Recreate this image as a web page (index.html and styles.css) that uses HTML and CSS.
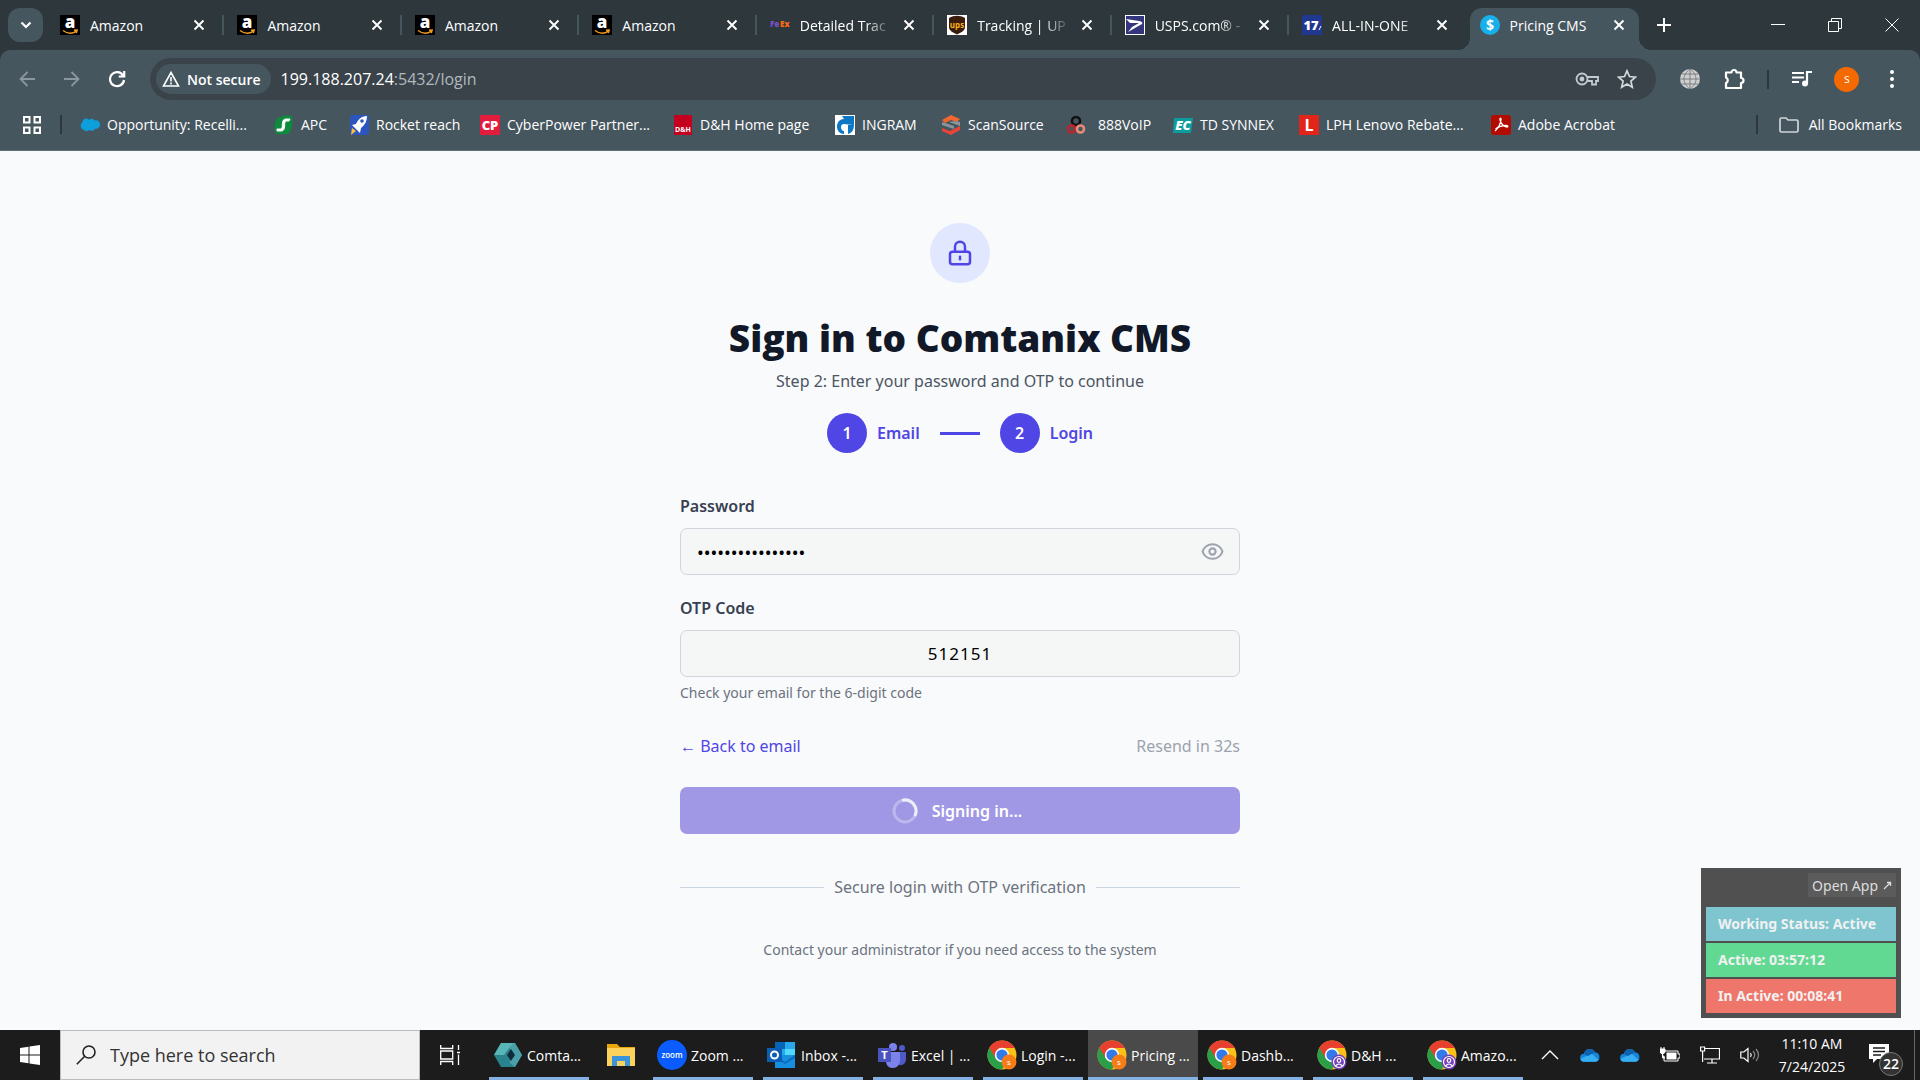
FILE: index.html
```html
<!DOCTYPE html>
<html lang="en">
<head>
  <meta charset="UTF-8" />
  <meta name="viewport" content="width=device-width, initial-scale=1.0" />
  <title>Pricing CMS</title>
  <link rel="stylesheet" href="styles.css">
</head>
<body>
  <!-- Shared icons -->
  <svg class="sprite" aria-hidden="true">
    <symbol id="i-close" viewBox="0 0 12 12"><path d="M1.500 1.500l9 9M10.500 1.500l-9 9" fill="none" stroke="currentColor" stroke-width="1.900"/></symbol>
    <symbol id="i-amazon" viewBox="0 0 20 20">
      <rect width="20" height="20" fill="#000"/>
      <text x="10" y="13" text-anchor="middle" font-family="Open Sans, sans-serif" font-weight="800" font-size="17" fill="#fff">a</text>
      <path d="M3 15.500c4.500 3.400 9.500 3.200 13.500.6M14 15.300l3.200-.2-.9 3" fill="none" stroke="#f39a1f" stroke-width="1.400"/>
    </symbol>
    <symbol id="i-chrome" viewBox="0 0 30 30">
      <circle cx="15" cy="15" r="14.500" fill="#fbc116"/>
      <path d="M15 15L2.400 7.700A14.500 14.500 0 0 0 15 29.500l6.300-10.900z" fill="#2b9f48"/>
      <path d="M2.400 7.700A14.500 14.500 0 0 1 27.600 8H15l-6.300 10.600z" fill="#e8402f"/>
      <circle cx="15" cy="15" r="7.200" fill="#fff"/>
      <circle cx="15" cy="15" r="5.600" fill="#3279ea"/>
    </symbol>
    <symbol id="i-cloud" viewBox="0 0 22 16">
      <path d="M5 15.500a4.500 4.500 0 0 1-.6-9A6.500 6.500 0 0 1 16.500 5a5.300 5.300 0 0 1 .5 10.500z" fill="#1583d8"/>
      <path d="M5.500 15.500c-3 0-4.600-1.500-5-3.500L13 6.500l7.500 6.800c-.8 1.400-2 2.200-3.500 2.200z" fill="#35aef2"/>
      <path d="M4.400 6.500A6.500 6.500 0 0 1 16.500 5L8.500 9z" fill="#0c62ae"/>
    </symbol>
  </svg>

  <!-- Tab strip -->
  <header class="browser">
    <div class="tab-strip">
      <button class="tab-search" aria-label="Search tabs"><svg width="12" height="8" viewBox="0 0 12 8"><path d="M1.500 1.500L6 6l4.500-4.500" fill="none" stroke="currentColor" stroke-width="2.200"/></svg></button>
      <div class="tabs">
        <div class="tab"><svg class="fav"><use href="#i-amazon"/></svg><span class="tab-title">Amazon</span><button class="tab-close" aria-label="Close"><svg width="12" height="12"><use href="#i-close"/></svg></button></div>
        <div class="tab"><svg class="fav"><use href="#i-amazon"/></svg><span class="tab-title">Amazon</span><button class="tab-close" aria-label="Close"><svg width="12" height="12"><use href="#i-close"/></svg></button></div>
        <div class="tab"><svg class="fav"><use href="#i-amazon"/></svg><span class="tab-title">Amazon</span><button class="tab-close" aria-label="Close"><svg width="12" height="12"><use href="#i-close"/></svg></button></div>
        <div class="tab"><svg class="fav"><use href="#i-amazon"/></svg><span class="tab-title">Amazon</span><button class="tab-close" aria-label="Close"><svg width="12" height="12"><use href="#i-close"/></svg></button></div>
        <div class="tab">
          <svg class="fav" viewBox="0 0 20 20" font-family="Open Sans, sans-serif" font-weight="800" font-size="8"><text x="0" y="12" fill="#7a4fc4">Fe</text><text x="10" y="12" fill="#ff6a13">Ex</text></svg>
          <span class="tab-title fade">Detailed Trac</span><button class="tab-close" aria-label="Close"><svg width="12" height="12"><use href="#i-close"/></svg></button>
        </div>
        <div class="tab">
          <svg class="fav" viewBox="0 0 20 20"><rect width="20" height="20" fill="#fff"/><path d="M2 3c5-3 11-3 16 0v9c0 4-4 5.500-8 7.500-4-2-8-3.500-8-7.500z" fill="#3a1c0c"/><text x="10" y="13" text-anchor="middle" font-family="Open Sans, sans-serif" font-weight="700" font-size="8" fill="#fbb215">ups</text></svg>
          <span class="tab-title fade">Tracking | UP</span><button class="tab-close" aria-label="Close"><svg width="12" height="12"><use href="#i-close"/></svg></button>
        </div>
        <div class="tab">
          <svg class="fav" viewBox="0 0 20 20"><rect width="20" height="20" fill="#fff"/><path d="M1 1h18v18H1z" fill="#35357e"/><path d="M1 4l13 2c3 .5 4 1.500 3 3L3 17l4-5 7-4H5z" fill="#fff"/></svg>
          <span class="tab-title fade">USPS.com® -</span><button class="tab-close" aria-label="Close"><svg width="12" height="12"><use href="#i-close"/></svg></button>
        </div>
        <div class="tab">
          <svg class="fav" viewBox="0 0 20 20"><rect width="20" height="20" rx="1" fill="#20388f"/><text x="9" y="15" text-anchor="middle" font-family="Open Sans, sans-serif" font-weight="800" font-size="13" fill="#fff">17</text><path d="M17 15l2-4" stroke="#fff"/></svg>
          <span class="tab-title fade">ALL-IN-ONE</span><button class="tab-close" aria-label="Close"><svg width="12" height="12"><use href="#i-close"/></svg></button>
        </div>
        <div class="tab active">
          <svg class="fav" viewBox="0 0 20 20"><circle cx="10" cy="10" r="10" fill="#16b0ea"/><text x="10" y="15" text-anchor="middle" font-family="Open Sans, sans-serif" font-weight="700" font-size="14" fill="#fff">$</text></svg>
          <span class="tab-title">Pricing CMS</span><button class="tab-close" aria-label="Close"><svg width="12" height="12"><use href="#i-close"/></svg></button>
        </div>
      </div>
      <button class="new-tab" aria-label="New tab"><svg width="14" height="14" viewBox="0 0 14 14"><path d="M7 0v14M0 7h14" stroke="currentColor" stroke-width="2"/></svg></button>
      <div class="window-buttons">
        <button aria-label="Minimize"><svg width="14" height="14" viewBox="0 0 14 14"><path d="M0 6.500h14" stroke="currentColor"/></svg></button>
        <button aria-label="Restore"><svg width="14" height="14" viewBox="0 0 14 14"><path d="M.5 3.500h10v10H.5zM3.500 3V.5h10v10H11" fill="none" stroke="currentColor"/></svg></button>
        <button aria-label="Close window"><svg width="14" height="14" viewBox="0 0 14 14"><path d="M.5.500l13 13M13.500.500l-13 13" stroke="currentColor"/></svg></button>
      </div>
    </div>

    <!-- Address bar -->
    <div class="toolbar">
      <button class="tool dim" aria-label="Back"><svg width="16" height="16" viewBox="0 0 16 16"><path d="M16 8H1.500M8.500 1L1.500 8l7 7" fill="none" stroke="currentColor" stroke-width="1.800"/></svg></button>
      <button class="tool dim" aria-label="Forward"><svg width="16" height="16" viewBox="0 0 16 16"><path d="M0 8h14.500M7.500 1l7 7-7 7" fill="none" stroke="currentColor" stroke-width="1.800"/></svg></button>
      <button class="tool" aria-label="Reload"><svg width="18" height="18" viewBox="0 0 18 18"><path d="M15 5.500A7 7 0 1 0 16 10M16.200 1v5.500h-5.500" fill="none" stroke="currentColor" stroke-width="2.200"/></svg></button>
      <div class="omnibox">
        <button class="chip"><svg width="18" height="16" viewBox="0 0 18 16"><path d="M9 1.500L16.500 15h-15zM9 6v4.500M9 11.500v2" fill="none" stroke="currentColor" stroke-width="1.600"/></svg>Not secure</button>
        <span class="url">199.188.207.24<span class="url-path">:5432/login</span></span>
        <svg width="24" height="14" viewBox="0 0 24 14" fill="none" stroke="#c3cbd0" stroke-width="1.800"><circle cx="7" cy="7" r="5.500"/><circle cx="7" cy="7" r="1.500" fill="#c3cbd0"/><path d="M12 5h11v4h-2v3.500h-4V9h-5"/></svg>
        <svg class="star" width="20" height="20" viewBox="0 0 20 20"><path d="M10 1.800l2.500 5.700 6 .6-4.600 4 1.400 6.100-5.300-3.200-5.300 3.200 1.400-6.100-4.600-4 6-.6z" fill="none" stroke="#d3dade" stroke-width="1.700"/></svg>
      </div>
      <div class="extensions">
        <button class="tool" aria-label="Extension"><svg width="20" height="20" viewBox="0 0 20 20"><circle cx="10" cy="10" r="10" fill="#cfcfcf"/><path d="M10 0v20M0 10h20M2 5h16M2 15h16M10 0C2 6 2 14 10 20M10 0c8 6 8 14 0 20" fill="none" stroke="#7b7f82"/></svg></button>
        <button class="tool" aria-label="Extensions"><svg width="22" height="22" viewBox="0 0 22 22"><path d="M2 4.500h5.500a2.500 2.500 0 0 1 5 0H17v5.500a2.500 2.500 0 0 1 0 5V20H2v-5a3 3 0 0 0 0-5.500z" fill="none" stroke="currentColor" stroke-width="2.200" stroke-linejoin="round"/></svg></button>
        <span class="bar-sep"></span>
        <button class="tool" aria-label="Media"><svg width="20" height="18" viewBox="0 0 20 18"><path d="M0 3h12M0 7.500h12M0 12h7M15 13V2h5" fill="none" stroke="currentColor" stroke-width="2.200"/><circle cx="13" cy="13.500" r="3" fill="currentColor"/></svg></button>
        <button class="avatar">s</button>
        <button class="tool" aria-label="Menu"><svg width="4" height="18" viewBox="0 0 4 18" fill="currentColor"><circle cx="2" cy="2" r="2"/><circle cx="2" cy="9" r="2"/><circle cx="2" cy="16" r="2"/></svg></button>
      </div>
    </div>

    <!-- Bookmarks bar -->
    <nav class="bookmarks">
      <button class="apps" aria-label="Apps"><svg width="18" height="18" viewBox="0 0 18 18"><path d="M1 1h5.500v5.500H1zM11.500 1H17v5.500h-5.500zM1 11.500h5.500V17H1zM11.500 11.500H17V17h-5.500z" fill="none" stroke="currentColor" stroke-width="2"/></svg></button>
      <span class="bar-sep"></span>
      <div class="bookmark-list">
        <a href="#"><svg class="fav" viewBox="0 0 20 20"><path d="M4 15a4.500 4.500 0 0 1-1.500-8C3 3 7 2.500 9 5c2-2 4.500-1.500 5.500.5 3-.8 5.500 1 5.500 4s-2.500 4.800-5 4.300c-1.500 2.500-4 2.500-5.500 1.200-2 1.500-4.500 1.500-5.500 0z" fill="#0d9fdb"/></svg>Opportunity: Recelli...</a>
        <a href="#"><svg class="fav" viewBox="0 0 20 20"><path d="M3 4c4-4 11-4 15-3 1 8 0 14-4 18H2C0 13 0 8 3 4z" fill="#0c8b3c"/><path d="M16 4h-4C6 4 10 13 7 14H3v2h4c6 0 2-9 5-10h3z" fill="#fff" stroke="#fff"/></svg>APC</a>
        <a href="#"><svg class="fav" viewBox="0 0 20 20"><rect x="1" width="19" height="20" rx="3" fill="#2c55bd"/><path d="M18 1c-6 0-9 4-11 8l-4 1 5 5 3 3 1-5c4-3 6-7 6-12z" fill="#fff"/><path d="M3 13l4 3-5 4z" fill="#f9c431"/><circle cx="13" cy="6" r="1.800" fill="#2c55bd"/></svg>Rocket reach</a>
        <a href="#"><svg class="fav" viewBox="0 0 20 20"><rect width="20" height="20" fill="#e31c3d"/><text x="10" y="15" text-anchor="middle" font-family="Open Sans, sans-serif" font-weight="800" font-size="13" fill="#fff">CP</text></svg>CyberPower Partner...</a>
        <a href="#"><svg class="fav" viewBox="0 0 20 20"><rect x="1" width="18" height="20" fill="#c4001f"/><text x="10" y="17" text-anchor="middle" font-family="Open Sans, sans-serif" font-weight="700" font-size="7" fill="#fff">D&amp;H</text></svg>D&amp;H Home page</a>
        <a href="#"><svg class="fav" viewBox="0 0 20 20"><rect width="20" height="20" fill="#fff"/><path d="M7 1h12v8c0 6-2 9-6 10v-9h5L9 9c-2 0-3 1-3 3s1 4 3 4v3c-4 0-7-3-7-7.500S5 4 9 4z" fill="#0b77c5"/></svg>INGRAM</a>
        <a href="#"><svg class="fav" viewBox="0 0 20 20"><path d="M10 0l9 4-3 3-6-2-6 3-3-3z" fill="#f0682f"/><path d="M1 7l12 4v3L1 10zM8 7l11 4v-4l-5-1z" fill="#8b9598"/><path d="M1 13l8 3 6-3 4-2v4l-9 5-9-4z" fill="#e8443a"/></svg>ScanSource</a>
        <a class="wide" href="#"><svg class="fav" viewBox="0 0 20 20" fill="none" stroke-width="2.600"><circle cx="10" cy="6" r="4" stroke="#101010"/><circle cx="5.500" cy="14" r="3.500" stroke="#b8262c"/><circle cx="14.500" cy="14" r="3.500" stroke="#e88a78"/></svg>888VoIP</a>
        <a href="#"><svg class="fav" viewBox="0 0 20 20"><path d="M1 3h19l-2 15H0z" fill="#0d9c9d"/><text x="10" y="15" text-anchor="middle" font-family="Open Sans, sans-serif" font-weight="800" font-style="italic" font-size="13" fill="#fff">EC</text></svg>TD SYNNEX</a>
        <a href="#"><svg class="fav" viewBox="0 0 20 20"><rect width="20" height="20" fill="#e1251b"/><text x="10" y="16" text-anchor="middle" font-family="Open Sans, sans-serif" font-weight="700" font-size="16" fill="#fff">L</text></svg>LPH Lenovo Rebate...</a>
        <a href="#"><svg class="fav" viewBox="0 0 20 20"><rect width="20" height="20" rx="3" fill="#b30b00"/><path d="M4 16c3-2 6-8 6-11.500 0-2-1.500-1.500-1 .5.500 3 4 7 7 7 1.500 0 1-1.500-1-1.500-4 0-8 1.500-10.500 3.500" fill="none" stroke="#fff" stroke-width="1.300"/></svg>Adobe Acrobat</a>
      </div>
      <span class="bar-sep"></span>
      <a class="all-bookmarks" href="#"><svg width="20" height="16" viewBox="0 0 20 16"><path d="M1 2.500Q1 1 2.500 1H7l2 2h8.500Q19 3 19 4.500v9q0 1.500-1.500 1.500h-15Q1 15 1 13.500z" fill="none" stroke="#cfd5d9" stroke-width="1.700"/></svg>All Bookmarks</a>
    </nav>
  </header>

  <!-- Sign in page -->
  <main class="page">
    <div class="login">
      <div class="lock-badge"><svg width="30" height="30" viewBox="0 0 24 24" fill="none" stroke="#4f46e5" stroke-width="2" stroke-linecap="round" stroke-linejoin="round"><path d="M12 15v2m-6 4h12a2 2 0 002-2v-6a2 2 0 00-2-2H6a2 2 0 00-2 2v6a2 2 0 002 2zm10-10V7a4 4 0 00-8 0v4"/></svg></div>
      <h1>Sign in to Comtanix CMS</h1>
      <p class="subtitle">Step 2: Enter your password and OTP to continue</p>
      <div class="steps">
        <span class="step-num">1</span><span class="step-name">Email</span>
        <span class="step-line"></span>
        <span class="step-num">2</span><span class="step-name">Login</span>
      </div>

      <form>
        <label for="password">Password</label>
        <div class="field">
          <input type="password" id="password" value="comtanix20250724" />
          <button type="button" class="eye" aria-label="Show password"><svg width="25" height="25" viewBox="0 0 24 24" fill="none" stroke="#9ca3af" stroke-width="2" stroke-linecap="round" stroke-linejoin="round"><path d="M15 12a3 3 0 11-6 0 3 3 0 016 0z"/><path d="M2.458 12C3.732 7.943 7.523 5 12 5c4.478 0 8.268 2.943 9.542 7-1.274 4.057-5.064 7-9.542 7-4.477 0-8.268-2.943-9.542-7z"/></svg></button>
        </div>
        <label for="otp">OTP Code</label>
        <input class="otp" type="text" id="otp" value="512151" maxlength="6" />
        <p class="hint">Check your email for the 6-digit code</p>
        <div class="form-links">
          <a href="#">← Back to email</a>
          <span class="resend">Resend in 32s</span>
        </div>
        <button type="button" class="submit"><svg width="26" height="26" viewBox="0 0 26 26" fill="none" stroke="#fff" stroke-width="3"><circle cx="13" cy="13" r="11" opacity=".3"/><path d="M10 2.400A11 11 0 0 1 22.800 18" opacity=".75"/></svg>Signing in...</button>
      </form>

      <div class="divider"><span>Secure login with OTP verification</span></div>
      <p class="contact">Contact your administrator if you need access to the system</p>
    </div>

    <!-- Time tracker floating over the page -->
    <aside class="tracker">
      <button class="open-app">Open App <svg width="9" height="9" viewBox="0 0 9 9"><path d="M1 8l6-6M4 1.500h3.500V5" fill="none" stroke="currentColor" stroke-width="1.300"/></svg></button>
      <div class="track status">Working Status: Active</div>
      <div class="track on">Active: 03:57:12</div>
      <div class="track off">In Active: 00:08:41</div>
    </aside>
  </main>

  <!-- Taskbar -->
  <footer class="taskbar">
    <button class="start" aria-label="Start"><svg width="20" height="20" viewBox="0 0 20 20" fill="#fff"><path d="M0 3l8.500-1.200v7.700H0zM9.500 1.600L20 0v9.500H9.500zM0 10.500h8.500v7.700L0 17zM9.500 10.500H20V20L9.500 18.400z"/></svg></button>
    <label class="search">
      <svg width="20" height="20" viewBox="0 0 20 20" fill="none" stroke="#222" stroke-width="1.600"><circle cx="13" cy="7" r="6"/><path d="M8.500 11.500L.8 19.200"/></svg>
      <input type="text" placeholder="Type here to search" />
    </label>
    <button class="task-view" aria-label="Task view"><svg width="20" height="20" viewBox="0 0 20 20" fill="none" stroke="#fff" stroke-width="1.300"><path d="M.7 0v3.500h12V0M.7 20v-3.500h12V20M.7 6h12v8H.7zM18.500 0v5M18.500 9.500V20M17 7.500h3"/></svg></button>
    <div class="tasks">
      <button class="task"><svg class="task-icon" viewBox="0 0 30 30"><path d="M8 3h14l7 12-7 12H8L1 15z" fill="#2a828c"/><path d="M8 3h14l-5 4-6 8H1z" fill="#58b5b8"/><path d="M17 7l5-4 7 12-7 12-5-4z" fill="#4aa0a6"/><path d="M18 9l4 6-4 6-4-6z" fill="#122d3a"/></svg><span>Comta...</span></button>
      <button class="task pinned" aria-label="File Explorer"><svg class="task-icon" viewBox="0 0 30 30"><path d="M1 4h10l3 3h15v18H1z" fill="#e8a80c"/><path d="M1 8h28v18H1z" fill="#fbd35c"/><path d="M6 26V16h18v10h-5v-5h-8v5z" fill="#3b94d9"/></svg></button>
      <button class="task"><svg class="task-icon" viewBox="0 0 30 30"><circle cx="15" cy="15" r="15" fill="#0b5cff"/><text x="15" y="18" text-anchor="middle" font-family="Open Sans, sans-serif" font-weight="600" font-size="8" fill="#fff">zoom</text></svg><span>Zoom ...</span></button>
      <button class="task"><svg class="task-icon" viewBox="0 0 30 30"><path d="M8 2h20v13H8z" fill="#28a8ea"/><path d="M8 2h10v7H8z" fill="#0364b8"/><path d="M18 9h10v6H18z" fill="#50d9ff"/><path d="M8 15h20v13H8z" fill="#1490df"/><path d="M8 15l10 7 10-7v3l-10 6-10-6z" fill="#0c6cbb"/><path d="M0 8h15v14H0z" fill="#0a5fb4"/><circle cx="7.500" cy="15" r="3.500" fill="none" stroke="#fff" stroke-width="2"/></svg><span>Inbox -...</span></button>
      <button class="task"><svg class="task-icon" viewBox="0 0 30 30"><circle cx="16" cy="7" r="4" fill="#7b83eb"/><circle cx="25" cy="8" r="3" fill="#5059c9"/><path d="M20 12h9v8q-1 6-7 5z" fill="#5059c9"/><path d="M9 12h14v9q-1 7-7 7t-7-6z" fill="#7b83eb"/><path d="M1 8h13v14H1z" fill="#4b53bc"/><text x="7.500" y="19" text-anchor="middle" font-family="Open Sans, sans-serif" font-weight="700" font-size="11" fill="#fff">T</text></svg><span>Excel | ...</span></button>
      <button class="task"><svg class="task-icon" viewBox="0 0 30 30"><use href="#i-chrome"/><circle cx="22" cy="22" r="7.500" fill="#f57c16"/><text x="22" y="25" text-anchor="middle" font-family="Open Sans, sans-serif" font-size="8" fill="#fff">s</text></svg><span>Login -...</span></button>
      <button class="task current"><svg class="task-icon" viewBox="0 0 30 30"><use href="#i-chrome"/><circle cx="22" cy="22" r="7.500" fill="#f57c16"/><text x="22" y="25" text-anchor="middle" font-family="Open Sans, sans-serif" font-size="8" fill="#fff">s</text></svg><span>Pricing ...</span></button>
      <button class="task"><svg class="task-icon" viewBox="0 0 30 30"><use href="#i-chrome"/><circle cx="22" cy="22" r="7.500" fill="#f57c16"/><text x="22" y="25" text-anchor="middle" font-family="Open Sans, sans-serif" font-size="8" fill="#fff">s</text></svg><span>Dashb...</span></button>
      <button class="task"><svg class="task-icon" viewBox="0 0 30 30"><use href="#i-chrome"/><circle cx="22" cy="22" r="7.500" fill="#7341b8"/><g fill="none" stroke="#fff" stroke-width="1.200"><circle cx="22" cy="22" r="5.500"/><circle cx="22" cy="20.500" r="1.800"/><path d="M18.500 26q3.500-4 7 0"/></g></svg><span>D&amp;H ...</span></button>
      <button class="task"><svg class="task-icon" viewBox="0 0 30 30"><use href="#i-chrome"/><circle cx="22" cy="22" r="7.500" fill="#7341b8"/><g fill="none" stroke="#fff" stroke-width="1.200"><circle cx="22" cy="22" r="5.500"/><circle cx="22" cy="20.500" r="1.800"/><path d="M18.500 26q3.500-4 7 0"/></g></svg><span>Amazo...</span></button>
    </div>
    <div class="tray">
      <svg width="20" height="20" viewBox="0 0 20 20"><path d="M2 14l8-8 8 8" fill="none" stroke="#fff" stroke-width="1.400"/></svg>
      <svg width="20" height="20"><use href="#i-cloud"/></svg>
      <svg width="20" height="20"><use href="#i-cloud"/></svg>
      <svg width="20" height="20" viewBox="0 0 20 20"><path d="M5 6h13v3h2v4h-2v3H4v-5" fill="none" stroke="#fff"/><path d="M6.500 7.500h10v7H6.500z" fill="#fff"/><path d="M0 4h5v3q-1 2-2.500 2T0 7zM1 2v2M4 2v2M2.500 9v4H5" fill="#fff" stroke="#fff"/></svg>
      <svg width="20" height="20" viewBox="0 0 20 20" fill="none" stroke="#fff" stroke-width="1.200"><path d="M5 3.500h14.500v10.500H4M12 14v4M7 18h10M.6 2h4v4h-4zM2.600 6v11"/></svg>
      <svg width="20" height="20" viewBox="0 0 20 20" fill="none" stroke="#fff" stroke-width="1.200"><path d="M.8 7h3L8 3.500v13L3.800 13h-3zM10.500 8q1.500 2 0 4"/><path d="M13 6q3.500 4 0 8M16 4q5 6 0 12" stroke="#888"/></svg>
    </div>
    <div class="clock"><span>11:10 AM</span><span>7/24/2025</span></div>
    <button class="notify" aria-label="Notifications">
      <svg width="20" height="20" viewBox="0 0 20 20"><path d="M0 1h20v15H8l-4 4v-4H0z" fill="#fff"/><path d="M4 5h12M4 8.500h12M4 12h8" stroke="#1c1c1c" stroke-width="1.400"/></svg>
      <span class="count">22</span>
    </button>
    <span class="desktop-edge"></span>
  </footer>
</body>
</html>
```

FILE: styles.css
```css
* {
  box-sizing: border-box;
}
body {
  margin: 0;
  min-height: 100vh;
  display: flex;
  flex-direction: column;
  font-family: "Open Sans", "Noto Sans", sans-serif;
  font-size: 14px;
  background-color: #f9fafb;
}
button {
  padding: 0;
  border: none;
  background: none;
  color: inherit;
  font: inherit;
  cursor: pointer;
}
a {
  color: inherit;
  text-decoration: none;
}
svg {
  display: block;
  flex: none;
}
.sprite {
  display: none;
}
.fav {
  width: 20px;
  height: 20px;
}

/* Browser frame */
.browser {
  background-color: #2d373c;
  color: #fff;
}
.tab-strip {
  display: flex;
  height: 50px;
  padding: 8px 0 0 8px;
}
.tab-search {
  display: flex;
  align-items: center;
  justify-content: center;
  width: 35px;
  height: 34px;
  margin-right: 7px;
  border-radius: 12px;
  background-color: #46565f;
}
.tabs {
  display: flex;
  flex: 0 1 1589px;
  gap: 8px;
  min-width: 0;
}
.tab {
  position: relative;
  display: flex;
  flex: 1;
  align-items: center;
  gap: 10px;
  min-width: 0;
  height: 34px;
  padding: 0 14px 0 10px;
}
.tab + .tab:not(.active)::before {
  content: "";
  position: absolute;
  left: -5px;
  top: 7px;
  width: 2px;
  height: 20px;
  background-color: #46565f;
}
.tab-title {
  flex: 1;
  overflow: hidden;
  white-space: nowrap;
}
.fade {
  -webkit-mask-image: linear-gradient(to right, #000 70%, transparent);
  mask-image: linear-gradient(to right, #000 70%, transparent);
}
.tab.active {
  height: 42px;
  padding-bottom: 8px;
  border-radius: 12px 12px 0 0;
  background-color: #46565f;
}
.tab.active::before,
.tab.active::after {
  content: "";
  position: absolute;
  bottom: 0;
  width: 12px;
  height: 12px;
}
.tab.active::before {
  right: 100%;
  background: radial-gradient(circle at 0 0, transparent 12px, #46565f 12px);
}
.tab.active::after {
  left: 100%;
  background: radial-gradient(circle at 100% 0, transparent 12px, #46565f 12px);
}
.new-tab {
  display: flex;
  align-items: center;
  justify-content: center;
  width: 34px;
  height: 34px;
  margin-left: 8px;
}
.window-buttons {
  display: flex;
  margin-left: auto;
}
.window-buttons button {
  display: flex;
  align-items: center;
  justify-content: center;
  width: 57px;
  height: 33px;
}

.toolbar {
  display: flex;
  align-items: center;
  height: 51px;
  padding: 7px 16px 0 15px;
  border-radius: 10px 10px 0 0;
  background-color: #46565f;
}
.tool {
  display: flex;
  align-items: center;
  justify-content: center;
  width: 24px;
  height: 24px;
  margin-right: 21px;
}
.dim {
  color: #8b979e;
}
.omnibox {
  display: flex;
  flex: 1;
  align-items: center;
  height: 42px;
  padding: 0 19px 0 6px;
  border-radius: 21px;
  background-color: #3a434a;
}
.chip {
  display: flex;
  align-items: center;
  gap: 7px;
  height: 30px;
  padding: 0 10px 0 6px;
  border-radius: 15px;
  background-color: #46565f;
  font-weight: 600;
}
.url {
  flex: 1;
  margin-left: 10px;
  font-size: 16px;
}
.url-path {
  color: #b0b9be;
}
.star {
  margin-left: 18px;
}
.extensions {
  display: flex;
  align-items: center;
  justify-content: space-between;
  width: 226px;
  margin-left: 22px;
}
.extensions .tool {
  margin: 0;
}
.bar-sep {
  width: 2px;
  height: 19px;
  background-color: #2d373c;
}
.avatar {
  width: 25px;
  height: 25px;
  border-radius: 50%;
  background-color: #f56a00;
  font-size: 12px;
  line-height: 24px;
}

.bookmarks {
  display: flex;
  align-items: center;
  height: 50px;
  padding: 0 18px 2px 23px;
  border-bottom: 1px solid #5f6d75;
  background-color: #46565f;
}
.apps {
  margin-right: 19px;
}
.bookmark-list {
  display: grid;
  flex: 1;
  grid-template-columns: 194px 75px 131px 193px 162px 106px 125px 107px 126px 192px auto;
  margin-left: 18px;
  overflow: hidden;
}
.bookmark-list a,
.all-bookmarks {
  display: flex;
  align-items: center;
  gap: 7px;
  white-space: nowrap;
}
.bookmark-list .wide {
  gap: 12px;
}
.all-bookmarks {
  gap: 10px;
  margin-left: 21px;
}

/* Sign in page */
.page {
  position: relative;
  flex: 1;
  padding: 72px 20px 20px;
  color: #4b5563;
  font-family: "Noto Sans", "Open Sans", sans-serif;
}
.login {
  display: flex;
  flex-direction: column;
  align-items: center;
  max-width: 560px;
  margin: 0 auto;
}
.lock-badge {
  display: flex;
  align-items: center;
  justify-content: center;
  width: 60px;
  height: 60px;
  border-radius: 50%;
  background-color: #e0e7ff;
}
h1 {
  margin: 32px 0 0;
  color: #111827;
  font-family: "Open Sans", sans-serif;
  font-size: 37px;
  font-weight: 800;
  line-height: 45px;
  white-space: nowrap;
}
.subtitle {
  margin: 9px 0 0;
  font-size: 16px;
  line-height: 25px;
}
.steps {
  display: flex;
  align-items: center;
  margin-top: 19px;
  color: #4f46e5;
  font-size: 16px;
  font-weight: 600;
}
.step-num {
  width: 40px;
  border-radius: 50%;
  background-color: #4f46e5;
  color: #fff;
  line-height: 40px;
  text-align: center;
}
.step-name {
  margin-left: 10px;
}
.step-line {
  width: 40px;
  height: 3px;
  margin: 0 20px;
  background-color: #4f46e5;
}
form {
  width: 100%;
  margin-top: 41px;
}
label {
  display: block;
  margin-bottom: 9px;
  color: #374151;
  font-size: 16px;
  font-weight: 600;
  line-height: 25px;
}
.field {
  position: relative;
  margin-bottom: 21px;
}
form input {
  display: block;
  width: 100%;
  height: 47px;
  padding: 0 16px;
  border: 1px solid #d1d5db;
  border-radius: 7px;
  background-color: #f5f7f7;
  color: #000;
  font-family: inherit;
  font-size: 18px;
}
.eye {
  position: absolute;
  top: 11px;
  right: 15px;
}
.otp {
  font-size: 17px;
  letter-spacing: 1px;
  text-align: center;
}
.hint {
  margin: 6px 0 0;
  color: #6b7280;
  line-height: 20px;
}
.form-links {
  display: flex;
  justify-content: space-between;
  margin-top: 31px;
  font-size: 16px;
  line-height: 25px;
}
.form-links a {
  color: #4f46e5;
}
.resend {
  color: #9ca3af;
}
.submit {
  display: flex;
  align-items: center;
  justify-content: center;
  gap: 14px;
  width: 100%;
  height: 47px;
  margin-top: 28px;
  padding-right: 6px;
  border-radius: 7px;
  background-color: #a098e4;
  color: #fff;
  font-size: 16px;
  font-weight: 600;
}
.divider {
  display: flex;
  align-items: center;
  gap: 10px;
  width: 100%;
  margin-top: 41px;
  color: #6b7280;
  font-size: 16px;
  line-height: 25px;
}
.divider::before,
.divider::after {
  content: "";
  flex: 1;
  height: 1px;
  background-color: #cbd5e1;
}
.contact {
  margin: 40px 0 0;
  color: #6b7280;
  line-height: 20px;
}

.tracker {
  position: absolute;
  right: 19px;
  bottom: 12px;
  display: flex;
  flex-direction: column;
  gap: 2px;
  width: 200px;
  padding: 5px;
  background-color: #505050;
  color: #f1f1f1;
}
.open-app {
  display: flex;
  align-items: center;
  align-self: flex-end;
  gap: 5px;
  height: 24px;
  margin-bottom: 8px;
  padding: 0 4px;
  background-color: #5b5b5b;
  color: #ddd;
}
.track {
  padding-left: 12px;
  font-weight: 700;
  line-height: 34px;
}
.status {
  background-color: #7ec5cf;
}
.on {
  background-color: #62d993;
}
.off {
  background-color: #ee766b;
}

/* Taskbar */
.taskbar {
  display: flex;
  align-items: stretch;
  height: 50px;
  background-color: #1c1c1c;
  color: #fff;
}
.start {
  display: flex;
  align-items: center;
  justify-content: center;
  width: 60px;
}
.search {
  display: flex;
  align-items: center;
  gap: 14px;
  width: 360px;
  margin: 0;
  padding-left: 15px;
  border: 1px solid #bbb;
  background-color: #f2f2f2;
}
.search input {
  flex: 1;
  min-width: 0;
  border: none;
  background: none;
  padding: 0;
  font-family: inherit;
  font-size: 18px;
}
.search input::placeholder {
  color: #333;
}
.task-view {
  display: flex;
  align-items: center;
  justify-content: center;
  width: 60px;
}
.tasks {
  display: flex;
  flex: 1;
  gap: 10px;
  padding-left: 9px;
}
.task {
  display: flex;
  align-items: center;
  gap: 4px;
  width: 100px;
  padding: 3px 0 0 4px;
  border-bottom: 3px solid #83b2e2;
  white-space: nowrap;
}
.task span {
  overflow: hidden;
}
.task-icon {
  width: 30px;
  height: 30px;
}
.pinned {
  width: 44px;
  padding-left: 7px;
  border-bottom-color: transparent;
}
.current {
  width: 110px;
  margin: 0 -5px;
  padding-left: 9px;
  background-color: #4a4a4a;
}
.tray {
  display: flex;
  align-items: center;
  gap: 20px;
}
.clock {
  display: flex;
  flex-direction: column;
  justify-content: center;
  width: 88px;
  margin-left: 8px;
  line-height: 23px;
  text-align: center;
}
.notify {
  position: relative;
  width: 34px;
  margin: 0 11px 0 13px;
}
.notify svg {
  margin-top: -4px;
}
.count {
  position: absolute;
  right: 0;
  bottom: 4px;
  width: 24px;
  border: 1px solid #777;
  border-radius: 50%;
  background-color: #333;
  font-weight: 600;
  line-height: 22px;
  text-align: center;
}
.desktop-edge {
  width: 6px;
  border-left: 1px solid #666;
}
```
